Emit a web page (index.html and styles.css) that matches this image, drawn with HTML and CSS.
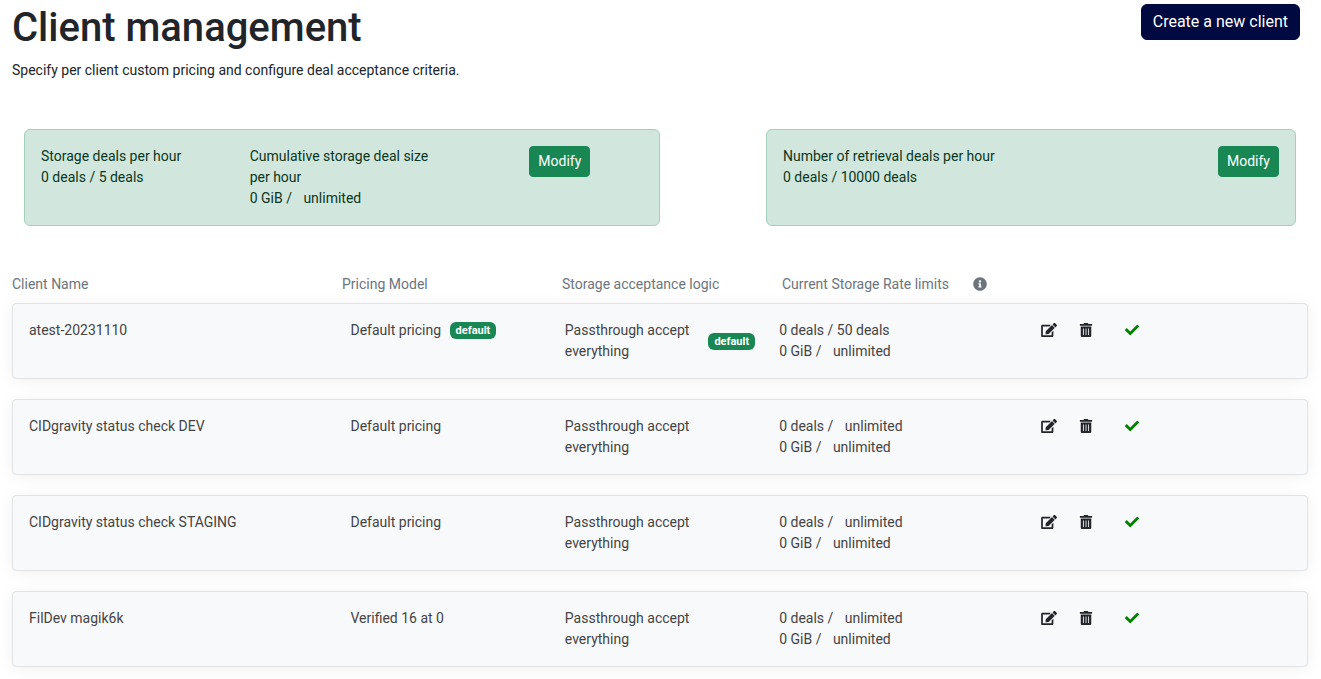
FILE: index.html
```html
<!DOCTYPE html>
<html lang="en">
<head>
<meta charset="utf-8">
<title>Client management</title>
<link rel="stylesheet" href="styles.css">
</head>
<body>
<svg class="sprite" aria-hidden="true">
  <symbol id="edit" viewBox="0 0 576 512"><path d="M402.600 83.200l90.200 90.200c3.800 3.800 3.800 10 0 13.800L274.400 405.600l-92.800 10.300c-12.400 1.400-22.900-9.100-21.500-21.500l10.300-92.800L388.800 83.200c3.800-3.800 10-3.800 13.800 0zm162-22.900l-48.800-48.800c-15.200-15.200-39.900-15.200-55.200 0l-35.400 35.400c-3.800 3.800-3.800 10 0 13.800l90.200 90.200c3.800 3.800 10 3.800 13.800 0l35.400-35.400c15.200-15.300 15.200-40 0-55.200zM384 346.200V448H64V128h229.800c3.200 0 6.200-1.300 8.500-3.500l40-40c7.600-7.600 2.200-20.500-8.500-20.500H48C21.500 64 0 85.500 0 112v352c0 26.500 21.500 48 48 48h352c26.500 0 48-21.500 48-48V306.200c0-10.700-12.900-16-20.500-8.500l-40 40c-2.200 2.300-3.500 5.300-3.500 8.500z"/></symbol>
  <symbol id="trash" viewBox="0 0 448 512"><path d="M32 464a48 48 0 0 0 48 48h288a48 48 0 0 0 48-48V128H32zm272-256a16 16 0 0 1 32 0v224a16 16 0 0 1-32 0zm-96 0a16 16 0 0 1 32 0v224a16 16 0 0 1-32 0zm-96 0a16 16 0 0 1 32 0v224a16 16 0 0 1-32 0zM432 32H312l-9.400-18.700A24 24 0 0 0 281.100 0H166.800a23.700 23.700 0 0 0-21.400 13.300L136 32H16A16 16 0 0 0 0 48v32a16 16 0 0 0 16 16h416a16 16 0 0 0 16-16V48a16 16 0 0 0-16-16z"/></symbol>
  <symbol id="check" viewBox="0 0 512 512"><path d="M173.900 439.400L7.500 273c-10-10-10-26.200 0-36.200l36.200-36.200c10-10 26.200-10 36.200 0L192 312.700 432.100 72.600c10-10 26.200-10 36.200 0l36.200 36.200c10 10 10 26.200 0 36.200L210.100 439.400c-10 10-26.200 10-36.200 0z"/></symbol>
  <symbol id="info" viewBox="0 0 512 512"><path d="M256 8C119 8 8 119 8 256s111 248 248 248 248-111 248-248S393 8 256 8zm0 110c23.200 0 42 18.800 42 42s-18.800 42-42 42-42-18.800-42-42 18.800-42 42-42zm56 254c0 6.600-5.400 12-12 12h-88c-6.600 0-12-5.400-12-12v-24c0-6.600 5.400-12 12-12h12v-64h-12c-6.600 0-12-5.400-12-12v-24c0-6.600 5.400-12 12-12h64c6.600 0 12 5.400 12 12v100h12c6.600 0 12 5.400 12 12v24z"/></symbol>
</svg>
<main class="page">
  <header class="header">
    <div>
      <h1 class="title">Client management</h1>
      <p class="lead">Specify per client custom pricing and configure deal acceptance criteria.</p>
    </div>
    <button class="create" type="button">Create a new client</button>
  </header>

  <section class="summary" aria-label="Rate limits">
    <div class="alert alert-storage">
      <div>Storage deals per hour<br>0 deals / 5 deals</div>
      <div>Cumulative storage deal size per hour<br>0 GiB / <span class="limit">unlimited</span></div>
      <div class="alert-action"><button class="modify" type="button">Modify</button></div>
    </div>
    <div class="alert alert-retrieval">
      <div>Number of retrieval deals per hour<br>0 deals / 10000 deals</div>
      <button class="modify" type="button">Modify</button>
    </div>
  </section>

  <section class="clients" aria-label="Clients">
    <div class="head">
      <div>Client Name</div>
      <div>Pricing Model</div>
      <div>Storage acceptance logic</div>
      <div class="head-limits">Current Storage Rate limits <svg class="icon icon-info"><use href="#info"/></svg></div>
    </div>

    <article class="card">
      <div class="cell">atest-20231110</div>
      <div class="cell">Default pricing <span class="badge badge-inline">default</span></div>
      <div class="cell logic"><span>Passthrough accept everything</span><span class="badge">default</span></div>
      <div class="cell">0 deals / 50 deals<br>0 GiB / <span class="limit">unlimited</span></div>
      <div class="cell actions">
        <button class="action" type="button" aria-label="Edit"><svg class="icon icon-edit"><use href="#edit"/></svg></button>
        <button class="action" type="button" aria-label="Delete"><svg class="icon"><use href="#trash"/></svg></button>
        <svg class="icon icon-check"><use href="#check"/></svg>
      </div>
    </article>

    <article class="card">
      <div class="cell">CIDgravity status check DEV</div>
      <div class="cell">Default pricing</div>
      <div class="cell logic"><span>Passthrough accept everything</span></div>
      <div class="cell">0 deals / <span class="limit">unlimited</span><br>0 GiB / <span class="limit">unlimited</span></div>
      <div class="cell actions">
        <button class="action" type="button" aria-label="Edit"><svg class="icon icon-edit"><use href="#edit"/></svg></button>
        <button class="action" type="button" aria-label="Delete"><svg class="icon"><use href="#trash"/></svg></button>
        <svg class="icon icon-check"><use href="#check"/></svg>
      </div>
    </article>

    <article class="card">
      <div class="cell">CIDgravity status check STAGING</div>
      <div class="cell">Default pricing</div>
      <div class="cell logic"><span>Passthrough accept everything</span></div>
      <div class="cell">0 deals / <span class="limit">unlimited</span><br>0 GiB / <span class="limit">unlimited</span></div>
      <div class="cell actions">
        <button class="action" type="button" aria-label="Edit"><svg class="icon icon-edit"><use href="#edit"/></svg></button>
        <button class="action" type="button" aria-label="Delete"><svg class="icon"><use href="#trash"/></svg></button>
        <svg class="icon icon-check"><use href="#check"/></svg>
      </div>
    </article>

    <article class="card">
      <div class="cell">FilDev magik6k</div>
      <div class="cell">Verified 16 at 0</div>
      <div class="cell logic"><span>Passthrough accept everything</span></div>
      <div class="cell">0 deals / <span class="limit">unlimited</span><br>0 GiB / <span class="limit">unlimited</span></div>
      <div class="cell actions">
        <button class="action" type="button" aria-label="Edit"><svg class="icon icon-edit"><use href="#edit"/></svg></button>
        <button class="action" type="button" aria-label="Delete"><svg class="icon"><use href="#trash"/></svg></button>
        <svg class="icon icon-check"><use href="#check"/></svg>
      </div>
    </article>
  </section>
</main>
</body>
</html>
```
FILE: styles.css
```css
* {
  box-sizing: border-box;
}

body {
  margin: 0;
  background: #fff;
  color: #212529;
  font-family: Roboto, "Liberation Sans", sans-serif;
  font-size: 14px;
  line-height: 21px;
}

button {
  font-family: inherit;
  cursor: pointer;
}

svg {
  display: block;
  fill: currentColor;
}

.sprite {
  display: none;
}

.page {
  padding: 4px 13px 0 12px;
}

.header {
  display: flex;
  justify-content: space-between;
  align-items: flex-start;
  padding-right: 8px;
}

.title {
  margin: 0 0 8px;
  font-size: 40px;
  line-height: 48px;
  font-weight: 500;
}

.lead {
  margin: 0;
}

.create {
  padding: 5px 11px;
  border: 1px solid #000940;
  border-radius: 6px;
  background: #000940;
  color: #fff;
  font-size: 16px;
  line-height: 24px;
}

.summary {
  display: grid;
  grid-template-columns: 6fr 5fr;
  column-gap: 106px;
  margin-top: 48px;
  padding: 0 12px;
}

.alert {
  display: grid;
  align-items: start;
  column-gap: 24px;
  padding: 16px;
  min-height: 97px;
  border: 1px solid #a3cfbb;
  border-radius: 6px;
  background: #d1e7dd;
  color: #0a3622;
}

.alert-storage {
  grid-template-columns: repeat(3, minmax(0, 1fr));
}

.alert-action {
  padding-left: 71px;
}

.alert-retrieval {
  grid-template-columns: 1fr auto;
}

.modify {
  display: block;
  padding: 4px 8px;
  border: 1px solid #198754;
  border-radius: 4px;
  background: #198754;
  color: #fff;
  font-size: 14px;
  line-height: 21px;
}

.limit {
  margin-left: 8px;
}

.clients {
  margin-top: 48px;
}

.head {
  display: grid;
  grid-template-columns: 3fr 2fr 2fr 5fr;
  margin: 0 -24px 8px 0;
  color: #6c757d;
}

.head-limits {
  display: flex;
  align-items: flex-start;
  gap: 24px;
}

.card {
  display: grid;
  grid-template-columns: 3fr 2fr 2fr 2fr 3fr;
  margin-bottom: 20px;
  padding: 16px 4px;
  border: 1px solid #e2e3e5;
  border-radius: 4px;
  background: #f8f9fa;
  box-shadow: 0 2px 16px rgba(0, 0, 0, 0.06);
  color: #444;
}

.card:last-child {
  margin-bottom: 12px;
}

.cell {
  min-width: 0;
  padding: 0 12px;
}

.logic {
  display: flex;
  align-items: center;
  justify-content: space-between;
  gap: 8px;
}

.badge {
  padding: 3px 6px;
  border-radius: 6px;
  background: #198754;
  color: #fff;
  font-size: 11px;
  line-height: 11px;
  font-weight: 700;
}

.badge-inline {
  display: inline-block;
  margin-left: 5px;
  vertical-align: 1px;
}

.actions {
  display: flex;
  align-items: center;
  height: 20px;
  padding-left: 60px;
  color: #212529;
}

.action {
  margin-right: 22px;
  padding: 0;
  border: 0;
  background: none;
  color: inherit;
}

.icon {
  width: 14px;
  height: 14px;
}

.icon-info {
  margin-top: 3px;
}

.icon-edit {
  width: 16px;
}

.icon-check {
  margin-left: 10px;
  color: #008000;
}
```
